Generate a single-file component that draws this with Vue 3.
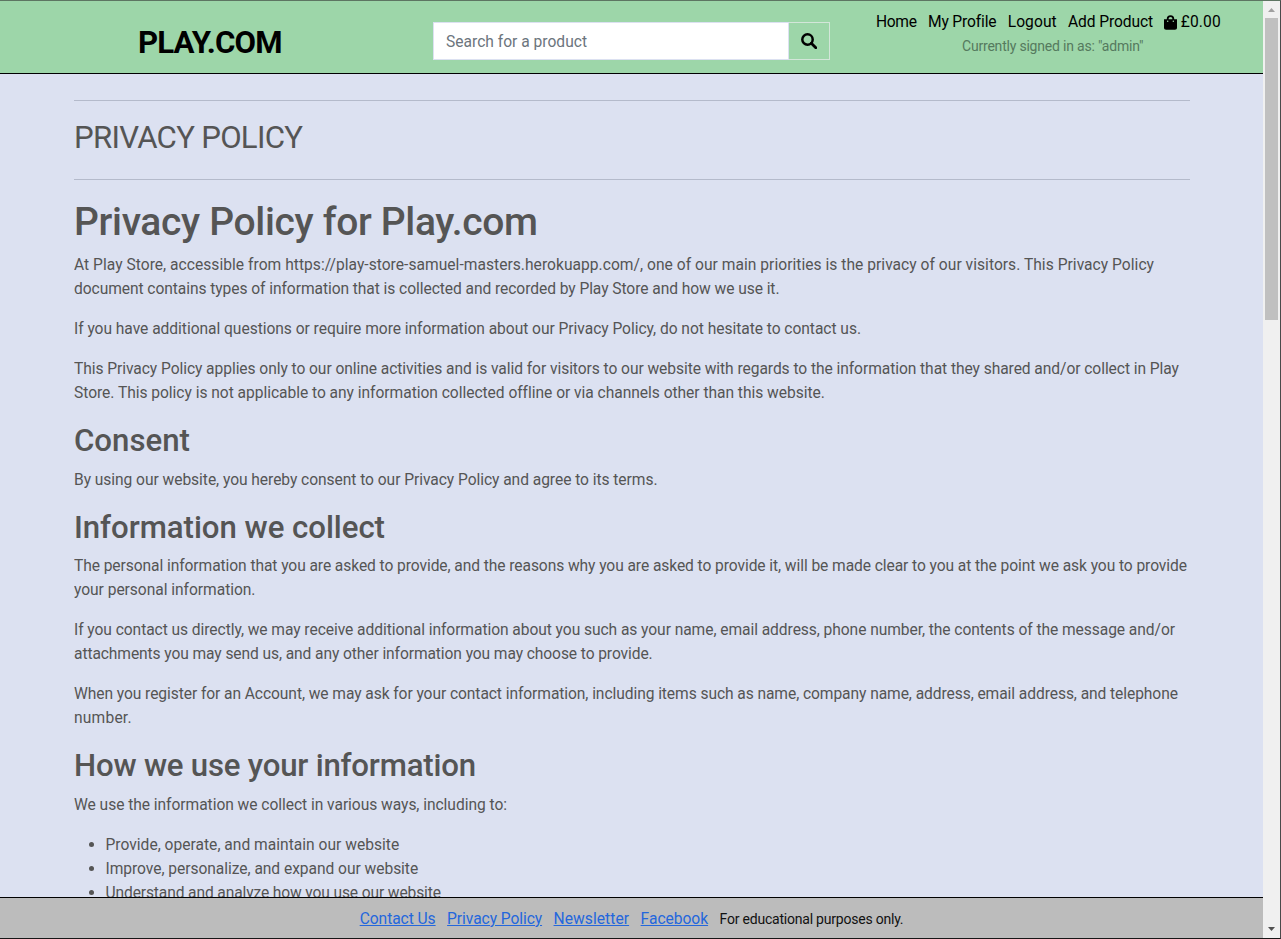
<script setup>
// Spreads a line of text over a set measure by adjusting its tracking
const vMeasure = {
  mounted(el, { value }) {
    const gaps = el.textContent.length - 1
    el.style.letterSpacing = (value - el.getBoundingClientRect().width) / gaps + 'px'
  }
}

const nav = [
  { text: 'Home', w: 41 },
  { text: 'My Profile', w: 68 },
  { text: 'Logout', w: 49 },
  { text: 'Add Product', w: 85 }
]

const links = [
  { text: 'Contact Us', w: 76 },
  { text: 'Privacy Policy', w: 95 },
  { text: 'Newsletter', w: 75.5 },
  { text: 'Facebook', w: 67.5 }
]

const blocks = [
  { tag: 'h1', lines: [['Privacy Policy for Play.com', 464]] },
  { tag: 'p', lines: [
    ['At Play Store, accessible from https://play-store-samuel-masters.herokuapp.com/, one of our main priorities is the privacy of our visitors. This Privacy Policy', 1080],
    ['document contains types of information that is collected and recorded by Play Store and how we use it.', 705.5]] },
  { tag: 'p', lines: [['If you have additional questions or require more information about our Privacy Policy, do not hesitate to contact us.', 787]] },
  { tag: 'p', lines: [
    ['This Privacy Policy applies only to our online activities and is valid for visitors to our website with regards to the information that they shared and/or collect in Play', 1105],
    ['Store. This policy is not applicable to any information collected offline or via channels other than this website.', 749.5]] },
  { tag: 'h2', lines: [['Consent', 116]] },
  { tag: 'p', lines: [['By using our website, you hereby consent to our Privacy Policy and agree to its terms.', 583.5]] },
  { tag: 'h2', lines: [['Information we collect', 311]] },
  { tag: 'p', lines: [
    ['The personal information that you are asked to provide, and the reasons why you are asked to provide it, will be made clear to you at the point we ask you to provide', 1113],
    ['your personal information.', 181.5]] },
  { tag: 'p', lines: [
    ['If you contact us directly, we may receive additional information about you such as your name, email address, phone number, the contents of the message and/or', 1101],
    ['attachments you may send us, and any other information you may choose to provide.', 578.7]] },
  { tag: 'p', lines: [
    ['When you register for an Account, we may ask for your contact information, including items such as name, company name, address, email address, and telephone', 1104],
    ['number.', 57.5]] },
  { tag: 'h2', lines: [['How we use your information', 402]] },
  { tag: 'p', lines: [['We use the information we collect in various ways, including to:', 433]] }
]

const uses = [
  ['Provide, operate, and maintain our website', 293.7],
  ['Improve, personalize, and expand our website', 312.7],
  ['Understand and analyze how you use our website', 335.5]
]
</script>

<template>
  <div class="window">
    <div class="page">
      <header class="header">
        <a class="brand"><span v-measure="144.5" class="line">PLAY.COM</span></a>
        <form class="search" @submit.prevent>
          <div class="field"><span v-measure="141" class="line">Search for a product</span></div>
          <button class="go" aria-label="Search">
            <svg width="16" height="16" viewBox="0 0 16 16">
              <circle cx="6.5" cy="6.5" r="5.2" fill="none" stroke="#000" stroke-width="2.5" />
              <path d="M10.3 10.3L14.8 14.8" stroke="#000" stroke-width="2.8" stroke-linecap="round" />
            </svg>
          </button>
        </form>
        <div class="account">
          <nav class="nav">
            <a v-for="n in nav" :key="n.text"><span v-measure="n.w" class="line">{{ n.text }}</span></a>
            <a class="bag">
              <svg width="13" height="15" viewBox="0 0 13 15">
                <path d="M3.7 6V3.8C3.7 2.2 4.9 1.1 6.5 1.1S9.3 2.2 9.3 3.8V6" fill="none" stroke="#000" stroke-width="1.8" />
                <path d="M0 4.3H13V12.6C13 14 12.2 14.8 10.9 14.8H2.1C.8 14.8 0 14 0 12.6Z" />
                <circle cx="3.7" cy="6.2" r=".75" fill="#9dd6a9" />
                <circle cx="9.3" cy="6.2" r=".75" fill="#9dd6a9" />
              </svg>
              <span v-measure="40" class="line">£0.00</span>
            </a>
          </nav>
          <div class="signed"><span v-measure="181.5" class="line">Currently signed in as: "admin"</span></div>
        </div>
      </header>

      <main class="content">
        <hr class="rule-top">
        <h2 class="title"><span v-measure="229" class="line">PRIVACY POLICY</span></h2>
        <hr class="rule-bottom">
        <component :is="b.tag" v-for="(b, i) in blocks" :key="i">
          <span v-for="l in b.lines" :key="l[0]" v-measure="l[1]" class="line">{{ l[0] }}</span>
        </component>
        <ul>
          <li v-for="u in uses" :key="u[0]"><span v-measure="u[1]" class="line">{{ u[0] }}</span></li>
        </ul>
      </main>

      <footer class="footer">
        <a v-for="l in links" :key="l.text" class="link"><span v-measure="l.w" class="line">{{ l.text }}</span></a>
        <small><span v-measure="184" class="line">For educational purposes only.</span></small>
      </footer>
    </div>

    <div class="scrollbar">
      <svg class="arrow" width="7" height="4" viewBox="0 0 7 4"><path d="M3.5 0L7 4H0Z" fill="#a0a0a0" /></svg>
      <div class="thumb"></div>
      <svg class="arrow" width="7" height="4" viewBox="0 0 7 4"><path d="M0 0H7L3.5 4Z" fill="#505050" /></svg>
    </div>
  </div>
</template>

<style>
body { margin: 0; overflow: hidden; }
</style>

<style scoped>
* { box-sizing: border-box; }
.window {
  display: flex;
  width: 1281px;
  height: 939px;
  overflow: hidden;
  border-top: 1px solid #5d7562;
  border-right: 1px solid #4a4a4a;
  border-bottom: 1px solid #161616;
  background: #dce1f1;
  color: #555;
  font: 16px/24px Roboto, "Liberation Sans", sans-serif;
}
.page {
  display: flex;
  flex-direction: column;
  width: 1263px;
  height: 937px;
}
.line {
  display: block;
  width: max-content;
  white-space: nowrap;
  font-size: .975em;
}
.header {
  display: flex;
  flex: none;
  height: 73px;
  background: #9dd6a9;
  border-bottom: 1px solid #000;
  color: #000;
}
.brand {
  width: 433px;
  padding: 23px 0 0 138px;
  font-size: 32px;
  line-height: 38px;
  font-weight: 700;
}
.search {
  display: flex;
  width: 397px;
  height: 38px;
  margin-top: 21px;
}
.field {
  width: 356px;
  padding: 7px 12px 0;
  background: #fff;
  border: 1px solid #dce1f1;
  color: #6c757d;
}
.go {
  width: 41px;
  padding: 0;
  display: flex;
  align-items: center;
  justify-content: center;
  background: #9dd6a9;
  border: 1px solid #d3e6d9;
  border-left: 0;
}
.account { padding: 9px 0 0 46px; }
.nav { display: flex; gap: 11.3px; }
.bag { display: flex; align-items: center; gap: 3.5px; }
.signed {
  padding-left: 86px;
  font-size: 14px;
  color: #557a5e;
}
.signed .line,
small .line { font-size: 1em; }
.content {
  flex: 1;
  min-height: 0;
  width: 1116px;
  margin-left: 74px;
  padding-top: 26px;
  overflow: hidden;
}
hr {
  height: 1px;
  border: 0;
  background: #b4bacb;
}
.rule-top { margin: 0 0 17px; }
.rule-bottom { margin: 0 0 17.6px; }
h1, h2 { font-weight: 500; }
h1 {
  margin: 0 0 6.9px;
  font-size: 40px;
  line-height: 48px;
}
h2 {
  margin: 0 0 7.2px;
  padding-top: 1.1px;
  font-size: 32px;
  line-height: 38.4px;
}
.title { margin-bottom: 21.9px; font-weight: 450; }
p { margin: 0 0 16px; }
ul { margin: 0; padding-left: 31.5px; }
.footer {
  display: flex;
  flex: none;
  justify-content: center;
  gap: 11.5px;
  height: 41px;
  padding-top: 9px;
  background: #bcbcbc;
  border-top: 1px solid #000;
  color: #111;
}
.link { color: #2467dc; text-decoration: underline; }
small { font-size: 14px; }
.scrollbar {
  display: flex;
  flex-direction: column;
  align-items: center;
  width: 17px;
  height: 937px;
  padding: 7px 0 7px;
  background: #f0f0f0;
}
.arrow { flex: none; }
.thumb {
  width: 13px;
  height: 302px;
  margin: 6px 0 auto;
  background: #c0c0c0;
}
</style>
